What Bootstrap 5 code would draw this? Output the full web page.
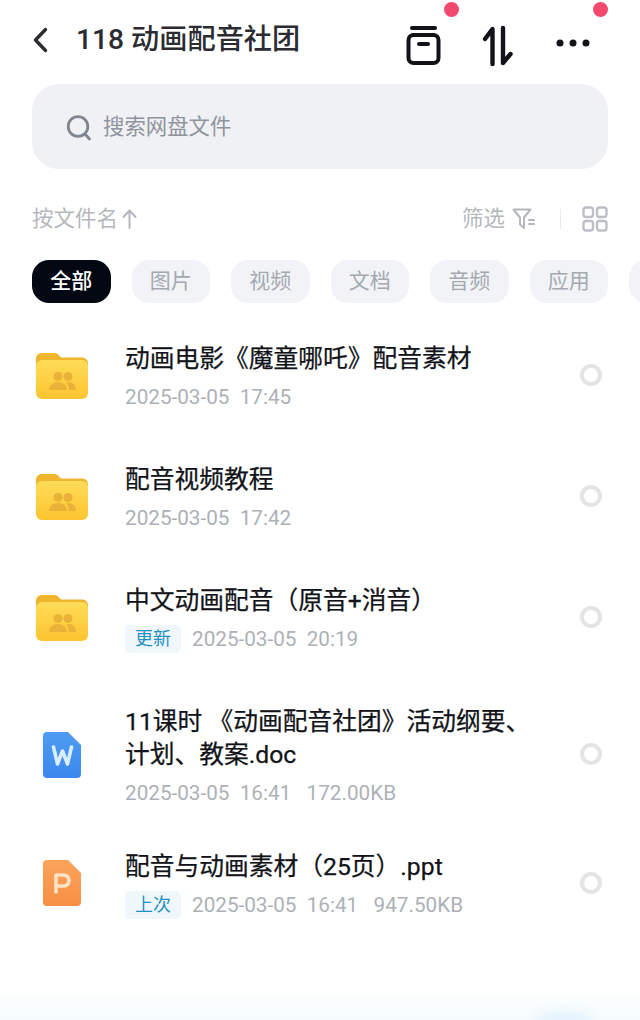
<!DOCTYPE html>
<html lang="zh-CN">
<head>
<meta charset="utf-8">
<title>118 动画配音社团</title>
<link href="https://cdn.jsdelivr.net/npm/bootstrap@5.3.0/dist/css/bootstrap.min.css" rel="stylesheet">
<style>
html,body{height:1020px;overflow:hidden}
body{font-family:Roboto,"Noto Sans CJK SC",sans-serif;background:#fff;color:#16181d;position:relative}
.topbar{height:78px;padding:2px 32px 0 32px}
.pagetitle{font-size:28.2px;font-weight:500;color:#2a2c31;margin-left:28px;line-height:1}
.tool{position:absolute;display:block}
.dot{position:absolute;width:15px;height:15px;border-radius:50%;background:#f4496f}
.searchbox{height:85px;margin:6px 32px 0;border-radius:27px;background:#eff1f5;padding-left:34px;padding-top:2px;color:#8f949c;font-size:21.4px}
.searchlabel{margin-left:11px}
.sortrow{height:50px;margin-top:25px;padding:0 32px;color:#b4b8be;font-size:21.5px}
.filtermark{margin-left:7px}
.vline{width:1px;height:20px;background:#e8eaed;margin:0 21px 0 24px}
.chips{margin-top:16px;padding-left:32px;gap:21px;overflow:hidden}
.chip{flex:0 0 78.5px;height:43px;border-radius:17px;background:#f1f3f6;color:#a4a9b1;font-size:21px}
.chip-on{background:#040812;color:#fff;font-weight:500}
.filerow{padding-left:36px;padding-right:38px}
.h121{height:121px}.h155{height:155px}.h102{height:102px}
.iconcol{width:52px;flex:none;margin-right:37px}
.fname{font-size:24.75px;line-height:33px;color:#111318;margin-top:1px;-webkit-text-stroke:.25px #111318}
.fmeta{font-size:20.7px;line-height:28px;color:#adb1b7;margin-top:8px;white-space:pre}
.tagmark{display:inline-flex;align-items:center;justify-content:center;width:56px;height:28px;border-radius:5px;background:#f0f7fb;color:#1f8fc2;font-size:18px;margin-right:11px;vertical-align:top}
.pick{width:22px;height:22px;border-radius:50%;border:4px solid #e3e4e6;flex:none;margin-bottom:2px}
.pick-high{margin-bottom:4px}
.wordicon{margin-top:-2px;margin-left:7px}
.tint{position:absolute;left:0;right:0;bottom:0;height:32px;background:linear-gradient(#fff,#f6fcfc)}
.glow{position:absolute;right:46px;bottom:-14px;width:60px;height:24px;border-radius:50%;background:#e4f3fd;filter:blur(6px)}
</style>
</head>
<body>
<div class="tint"></div><div class="glow"></div>
<svg width="0" height="0" class="position-absolute">
  <defs>
    <linearGradient id="fb" x1="0" y1="0" x2="0" y2="1"><stop offset="0" stop-color="#ffdc58"/><stop offset="1" stop-color="#fcc52f"/></linearGradient>
    <linearGradient id="wb" x1="0" y1="0" x2="0" y2="1"><stop offset="0" stop-color="#4f9cf2"/><stop offset="1" stop-color="#3a87ee"/></linearGradient>
    <linearGradient id="pb" x1="0" y1="0" x2="0" y2="1"><stop offset="0" stop-color="#fba35c"/><stop offset="1" stop-color="#f78f45"/></linearGradient>
    <symbol id="folder" viewBox="0 0 52 48">
      <path d="M6 1h12c2 0 3 .6 4.500 2L25 5.500h21c3.500 0 6 2.500 6 6V20H0V7c0-3.500 2.500-6 6-6z" fill="#efb52c"/>
      <rect y="8" width="52" height="39" rx="6" fill="url(#fb)"/>
      <g fill="#eab238"><circle cx="22" cy="24.500" r="4.500"/><circle cx="32" cy="24.500" r="4.500"/><path d="M13 38c0-5 4-8 9-8s9 3 9 8z"/><path d="M33 30c4 0 7 3.500 7 8h-7c0-3-1-6-3-7.500z"/></g>
    </symbol>
  </defs>
</svg>

<header class="topbar d-flex align-items-center">
  <svg width="16" height="26" viewBox="0 0 16 26" fill="none" stroke="#2a2c31" stroke-width="3.4" stroke-linecap="round" stroke-linejoin="round"><path d="M13.500 2.500 3.500 13l10 10.500"/></svg>
  <span class="pagetitle">118 动画配音社团</span>
</header>

<svg class="tool" style="left:406px;top:25px" width="35" height="42" viewBox="0 0 35 42" fill="none" stroke="#111318" stroke-width="4" stroke-linecap="round" stroke-linejoin="round"><path d="M6 3h23"/><rect x="2.500" y="10" width="30" height="28" rx="5"/><path d="M13 19h9"/></svg>
<svg class="tool" style="left:482px;top:25px" width="32" height="42" viewBox="0 0 32 42" fill="none" stroke="#111318" stroke-width="4.400" stroke-linecap="round" stroke-linejoin="round"><path d="M3 14 10.500 4v35"/><path d="M21 3v35l7.500-9"/></svg>
<svg class="tool" style="left:556px;top:37px" width="34" height="12" viewBox="0 0 34 12" fill="#111318"><circle cx="4" cy="6" r="3.500"/><circle cx="17" cy="6" r="3.500"/><circle cx="30" cy="6" r="3.500"/></svg>
<span class="dot" style="left:444px;top:2px"></span>
<span class="dot" style="left:593px;top:2px"></span>

<div class="searchbox d-flex align-items-center">
  <svg width="26" height="28" viewBox="0 0 26 28" fill="none" stroke="#80868f" stroke-width="2.800" stroke-linecap="round" class="flex-none"><circle cx="12" cy="12.500" r="9.800"/><path d="m19 20 4.500 5"/></svg>
  <span class="searchlabel">搜索网盘文件</span>
</div>

<div class="sortrow d-flex align-items-center justify-content-between">
  <div class="d-flex align-items-center">
    <span>按文件名</span>
    <svg class="ms-1" width="15" height="22" viewBox="0 0 15 22" fill="none" stroke="#b4b8be" stroke-width="2" stroke-linecap="round" stroke-linejoin="round"><path d="M7.500 20V2.500M1.500 9l6-6.500 6 6.500"/></svg>
  </div>
  <div class="d-flex align-items-center">
    <span>筛选</span>
    <svg class="filtermark" width="24" height="22" viewBox="0 0 24 22" fill="none" stroke="#b4b8be" stroke-width="2" stroke-linecap="round" stroke-linejoin="round"><path d="M1.500 1.500h17l-6.500 8V20l-4-3.500V9.500z"/><path d="M17 12h5M17 16h5"/></svg>
    <span class="vline"></span>
    <svg width="26" height="26" viewBox="0 0 26 26" fill="none" stroke="#bcc0c6" stroke-width="2.400"><rect x="1.500" y="1.500" width="9.500" height="9.500" rx="2.500"/><rect x="15" y="1.500" width="9.500" height="9.500" rx="2.500"/><rect x="1.500" y="15" width="9.500" height="9.500" rx="2.500"/><rect x="15" y="15" width="9.500" height="9.500" rx="2.500"/></svg>
  </div>
</div>

<div class="chips d-flex">
  <span class="chip chip-on d-flex align-items-center justify-content-center">全部</span>
  <span class="chip d-flex align-items-center justify-content-center">图片</span>
  <span class="chip d-flex align-items-center justify-content-center">视频</span>
  <span class="chip d-flex align-items-center justify-content-center">文档</span>
  <span class="chip d-flex align-items-center justify-content-center">音频</span>
  <span class="chip d-flex align-items-center justify-content-center">应用</span>
  <span class="chip d-flex align-items-center justify-content-center"></span>
</div>

<main style="margin-top:12px">
  <div class="filerow h121 d-flex align-items-center">
    <div class="iconcol"><svg width="52" height="48"><use href="#folder"/></svg></div>
    <div class="flex-grow-1"><div class="fname">动画电影《魔童哪吒》配音素材</div><div class="fmeta">2025-03-05  17:45</div></div>
    <span class="pick"></span>
  </div>
  <div class="filerow h121 d-flex align-items-center">
    <div class="iconcol"><svg width="52" height="48"><use href="#folder"/></svg></div>
    <div class="flex-grow-1"><div class="fname">配音视频教程</div><div class="fmeta">2025-03-05  17:42</div></div>
    <span class="pick"></span>
  </div>
  <div class="filerow h121 d-flex align-items-center">
    <div class="iconcol"><svg width="52" height="48"><use href="#folder"/></svg></div>
    <div class="flex-grow-1"><div class="fname">中文动画配音（原音+消音）</div><div class="fmeta"><span class="tagmark">更新</span>2025-03-05  20:19</div></div>
    <span class="pick"></span>
  </div>
  <div class="filerow h155 d-flex align-items-center">
    <div class="iconcol"><svg class="wordicon" width="38" height="46" viewBox="0 0 38 46"><path d="M4 0h21l13 13v29c0 2.500-1.500 4-4 4H4c-2.500 0-4-1.500-4-4V4c0-2.500 1.500-4 4-4z" fill="url(#wb)"/><path d="M10.500 15l4 17 5-13 5 13 4-17" fill="none" stroke="#d8eefc" stroke-width="3.600" stroke-linecap="round" stroke-linejoin="round"/></svg></div>
    <div class="flex-grow-1"><div class="fname">11课时 《动画配音社团》活动纲要、<br>计划、教案.doc</div><div class="fmeta">2025-03-05  16:41   172.00KB</div></div>
    <span class="pick pick-high"></span>
  </div>
  <div class="filerow h102 d-flex align-items-center">
    <div class="iconcol"><svg class="wordicon" width="38" height="46" viewBox="0 0 38 46"><path d="M4 0h21l13 13v29c0 2.500-1.500 4-4 4H4c-2.500 0-4-1.500-4-4V4c0-2.500 1.500-4 4-4z" fill="url(#pb)"/><path d="M13 32V15h7c3.500 0 6 2 6 5.500S23.500 26 20 26h-7" fill="none" stroke="#fde3c8" stroke-width="3.600" stroke-linecap="round" stroke-linejoin="round"/></svg></div>
    <div class="flex-grow-1"><div class="fname">配音与动画素材（25页）.ppt</div><div class="fmeta"><span class="tagmark">上次</span>2025-03-05  16:41   947.50KB</div></div>
    <span class="pick"></span>
  </div>
</main>
</body>
</html>
